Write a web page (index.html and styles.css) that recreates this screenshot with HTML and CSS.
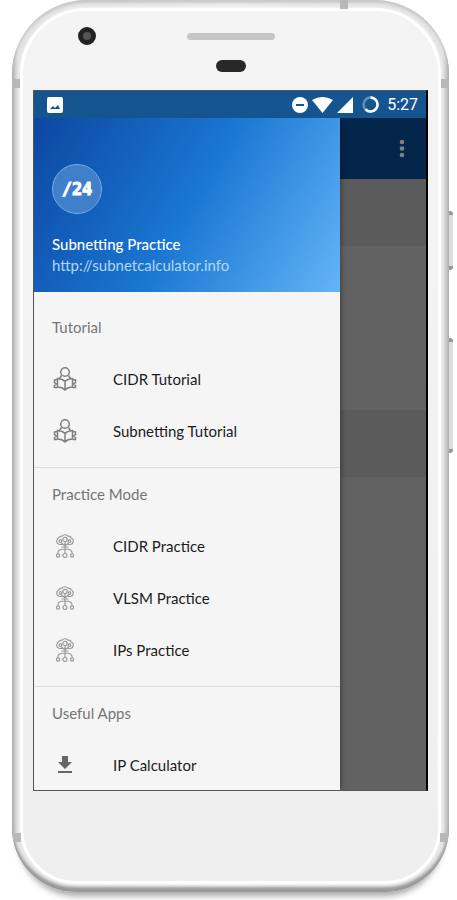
FILE: index.html
```html
<!DOCTYPE html>
<html lang="en">

<head>
  <meta charset="UTF-8" />
  <title>Subnetting Practice</title>
  <meta name="viewport" content="width=device-width, initial-scale=1.0" />
  <link rel="stylesheet" href="styles.css">
</head>

<body>

  <!-- shared icons -->
  <svg class="sprite" aria-hidden="true">
    <symbol id="reader" viewBox="0 0 24 24">
      <circle cx="12" cy="5" r="4.300" />
      <path d="M8.500 8.500 6.500 11.500M15.500 8.500l2 3M12 14.500v8.500M12 14.500C10 12.500 7.500 11.600 4.500 11.500v8.500c3 0 5.500.8 7.500 3 2-2.200 4.500-3 7.500-3v-8.500c-3 .1-5.500 1-7.500 3" />
      <path d="M4.500 12.500 1.500 13v2.500l2 1.500-2 1.500v2h3M19.500 12.500l3 .5v2.500l-2 1.500 2 1.500v2h-3" />
    </symbol>
    <symbol id="network" viewBox="0 0 20 24">
      <path d="M6 10.500H4.500A3.500 3.500 0 0 1 3.500 4 4 4 0 0 1 7 2.200a3.800 3.800 0 0 1 6 0A4 4 0 0 1 16.500 4a3.500 3.500 0 0 1-1 6.500H14" />
      <circle cx="10" cy="5.500" r="2.200" />
      <circle cx="5.500" cy="7" r="1.300" />
      <circle cx="14.500" cy="7" r="1.300" />
      <path d="M10 8v11.500M6 8.500 10 12l4-3.500M6 10.500h8M6.500 13h7M3 19.500V18.500c0-2.500 3-3.500 7-3.500s7 1 7 3.500v1" />
      <circle cx="3" cy="21.500" r="1.600" />
      <circle cx="10" cy="21.500" r="2" />
      <circle cx="17" cy="21.500" r="1.600" />
    </symbol>
  </svg>

  <div class="phone">
    <span class="band band-top"></span>
    <span class="band band-left"></span>
    <span class="band band-right"></span>
    <span class="band band-left band-low"></span>
    <span class="band band-right band-low"></span>
    <span class="side-key power"></span>
    <span class="side-key volume"></span>

    <div class="face">
      <div class="bezel">
        <span class="camera"></span>
        <span class="speaker"></span>
        <span class="sensor"></span>
      </div>

      <div class="screen">
        <div class="status-bar">
          <svg class="picture" width="16" height="16" viewBox="0 0 16 16">
            <rect width="16" height="16" rx="2" fill="#fff" />
            <path d="M3 12l3-3 2 2 3-3 2 4z" fill="#14558f" />
          </svg>
          <svg width="16" height="16" viewBox="0 0 16 16">
            <circle cx="8" cy="8" r="8" fill="#fff" />
            <path d="M4 8h8" stroke="#14558f" stroke-width="2" />
          </svg>
          <svg width="21" height="16" viewBox="0 0 21 16">
            <path d="M0 3Q10.500-3 21 3L10.500 16z" fill="#fff" />
          </svg>
          <svg width="16" height="16" viewBox="0 0 16 16">
            <path d="M16 0v16H0z" fill="#fff" />
          </svg>
          <svg class="battery" width="17" height="17" viewBox="0 0 17 17" fill="none" stroke-width="2.500">
            <circle cx="8.500" cy="8.500" r="7" stroke="#5f8fbb" />
            <path d="M8.500 1.500a7 7 0 1 1-5 11.900" stroke="#fff" />
          </svg>
          <span class="clock">5:27</span>
        </div>

        <div class="app">
          <aside class="drawer">
            <header class="drawer-header">
              <div class="logo">/24</div>
              <div class="title">Subnetting Practice</div>
              <a class="link" href="http://subnetcalculator.info">http://subnetcalculator.info</a>
            </header>

            <nav class="menu">
              <section class="group">
                <h2>Tutorial</h2>
                <a class="item" href="#cidr-tutorial"><svg class="icon line"><use href="#reader" /></svg>CIDR Tutorial</a>
                <a class="item" href="#subnetting-tutorial"><svg class="icon line"><use href="#reader" /></svg>Subnetting Tutorial</a>
              </section>
              <section class="group">
                <h2>Practice Mode</h2>
                <a class="item" href="#cidr-practice"><svg class="icon line thin"><use href="#network" /></svg>CIDR Practice</a>
                <a class="item" href="#vlsm-practice"><svg class="icon line thin"><use href="#network" /></svg>VLSM Practice</a>
                <a class="item" href="#ips-practice"><svg class="icon line thin"><use href="#network" /></svg>IPs Practice</a>
              </section>
              <section class="group">
                <h2>Useful Apps</h2>
                <a class="item" href="#ip-calculator">
                  <svg class="icon" viewBox="0 0 24 24" fill="#666">
                    <path d="M9 3h6v6h4l-7 7-7-7h4zM5 18h14v2H5z" />
                  </svg>IP Calculator
                </a>
              </section>
            </nav>
          </aside>

          <main class="page">
            <div class="toolbar">
              <button class="more" type="button" aria-label="More options">
                <svg width="6" height="20" viewBox="0 0 6 20" fill="#7b8088">
                  <circle cx="3" cy="3" r="2.300" />
                  <circle cx="3" cy="9.500" r="2.300" />
                  <circle cx="3" cy="16" r="2.300" />
                </svg>
              </button>
            </div>
            <div class="row dark"></div>
            <div class="row tall"></div>
            <div class="row dark"></div>
          </main>
        </div>
      </div>
    </div>
  </div>

</body>

</html>
```

FILE: styles.css
```css
* {
  margin: 0;
  padding: 0;
  box-sizing: border-box;
}

body {
  background: #fff;
  font-family: Lato, "Liberation Sans", sans-serif;
  font-size: 15px;
  overflow: hidden;
}

.sprite {
  position: absolute;
  width: 0;
  height: 0;
}

/* phone body */
.phone {
  position: relative;
  margin: 0 8px 8px 12px;
  padding: 8px;
  border-radius: 74px 74px 64px 64px;
  background: linear-gradient(90deg, #b4b4b4 0, #e4e4e4 6px, #eee 50%, #e4e4e4 calc(100% - 6px), #b4b4b4 100%);
  box-shadow: inset 0 -5px 3px #999, inset 0 3px 3px #c8c8c8, 0 10px 6px -6px rgba(0, 0, 0, 0.35);
}

.face {
  padding: 0 10px 90px;
  border: 3px solid #fff;
  border-radius: 66px 66px 56px 56px;
  background: linear-gradient(#f4f4f4, #efefef);
  box-shadow: 0 0 3px #fff;
}

.band {
  position: absolute;
  width: 8px;
  height: 9px;
  background: #b8b8b8;
}

.band-top {
  top: 0;
  right: 101px;
}

.band-left {
  top: 79px;
  left: 0;
}

.band-right {
  top: 79px;
  right: 0;
}

.band-low {
  top: auto;
  bottom: 50px;
  margin: 0 1px;
}

.side-key {
  position: absolute;
  right: -4px;
  width: 4px;
  border: solid #999;
  border-width: 4px 0;
  border-radius: 0 3px 3px 0;
  background: #ddd;
}

.power {
  top: 211px;
  height: 59px;
}

.volume {
  top: 338px;
  height: 115px;
}

.bezel {
  display: grid;
  grid-template-columns: 1fr 88px 1fr;
  grid-template-rows: 18px 26px;
  row-gap: 8px;
  align-items: center;
  height: 79px;
  padding-top: 16px;
}

.camera {
  width: 18px;
  height: 18px;
  margin-left: 45px;
  border: 5px solid #222;
  border-radius: 50%;
  background: #555;
}

.speaker {
  height: 7px;
  border-radius: 4px;
  background: #c6c6c6;
}

.sensor {
  grid-column: 2;
  justify-self: center;
  width: 30px;
  height: 12px;
  border-radius: 6px;
  background: #282828;
}

/* screen */
.screen {
  display: flex;
  flex-direction: column;
  aspect-ratio: 394 / 699;
  border: 1px solid #555;
  border-right: 2px solid #000;
  overflow: hidden;
}

.status-bar {
  display: flex;
  flex: none;
  align-items: center;
  z-index: 2;
  height: 27px;
  padding: 0 8px 0 13px;
  gap: 4px;
  background: #14558f;
  color: #fff;
}

.picture {
  margin-right: auto;
}

.battery {
  margin-left: 5px;
}

.clock {
  margin-left: 4px;
  font-family: Roboto, sans-serif;
  font-size: 16px;
}

.app {
  display: flex;
  flex: 1;
  min-height: 0;
}

.drawer {
  z-index: 1;
  width: 78%;
  background: #f5f5f5;
  box-shadow: 0 0 6px rgba(0, 0, 0, 0.5);
}

.drawer-header {
  height: 174px;
  padding: 46px 18px 0;
  background: linear-gradient(120deg, #0d47a1, #1976d2 50%, #64b5f6);
  color: #fff;
}

.logo {
  width: 50px;
  height: 50px;
  border: 1px solid #77a9e0;
  border-radius: 50%;
  background: #4080cb;
  font: bold 17px/48px "DejaVu Sans Mono", monospace;
  text-align: center;
  -webkit-text-stroke: 1px #fff;
}

.title {
  margin-top: 20px;
  font-weight: 500;
  line-height: 20px;
}

.link {
  display: block;
  color: #b5d5f5;
  line-height: 22px;
  text-decoration: none;
}

.menu {
  padding-top: 9px;
}

.group {
  padding-bottom: 10px;
  border-bottom: 1px solid #dcdcdc;
}

.group h2 {
  padding-left: 18px;
  color: #757575;
  font-size: 15px;
  font-weight: 400;
  line-height: 52px;
}

.item {
  display: flex;
  align-items: center;
  gap: 36px;
  height: 52px;
  padding-left: 19px;
  color: #1c1c1c;
  text-decoration: none;
}

.icon {
  width: 24px;
  height: 24px;
}

.line {
  fill: none;
  stroke: #808080;
  stroke-width: 1.5;
}

.thin {
  stroke: #9a9a9a;
  stroke-width: 1.2;
}

/* dimmed page behind the drawer */
.page {
  flex: 1;
  background: #626262;
}

.toolbar {
  display: flex;
  align-items: center;
  justify-content: flex-end;
  height: 61px;
  padding-right: 21px;
  background: #05264b;
  box-shadow: 0 1px 4px rgba(0, 0, 0, 0.4);
}

.more {
  display: flex;
  border: none;
  background: none;
  cursor: pointer;
}

.row {
  height: 67px;
}

.dark {
  background: #5b5b5b;
}

.tall {
  height: 164px;
}
```
